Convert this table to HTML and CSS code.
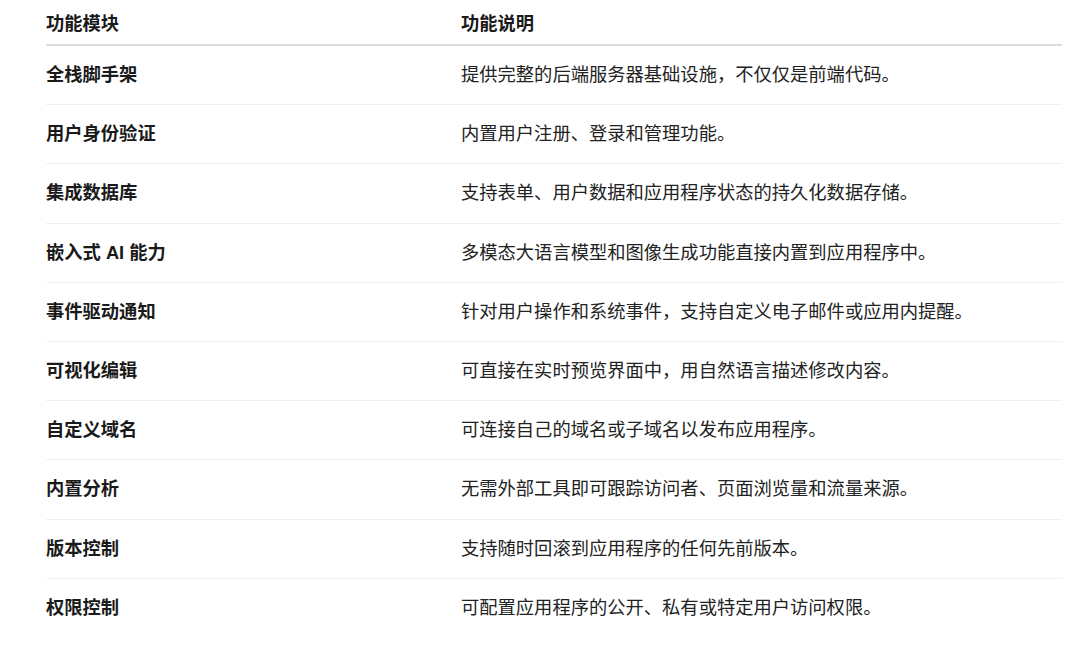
FILE: index.html
```html
<!DOCTYPE html>
<html lang="zh-CN">
<head>
<meta charset="utf-8">
<title>功能模块</title>
<link rel="stylesheet" href="styles.css">
</head>
<body>
<table class="features">
  <thead>
    <tr>
      <th class="col-name">功能模块</th>
      <th class="col-desc">功能说明</th>
    </tr>
  </thead>
  <tbody>
    <tr><td class="name">全栈脚手架</td><td class="desc">提供完整的后端服务器基础设施，不仅仅是前端代码。</td></tr>
    <tr><td class="name">用户身份验证</td><td class="desc">内置用户注册、登录和管理功能。</td></tr>
    <tr><td class="name">集成数据库</td><td class="desc">支持表单、用户数据和应用程序状态的持久化数据存储。</td></tr>
    <tr><td class="name">嵌入式 AI 能力</td><td class="desc">多模态大语言模型和图像生成功能直接内置到应用程序中。</td></tr>
    <tr><td class="name">事件驱动通知</td><td class="desc">针对用户操作和系统事件，支持自定义电子邮件或应用内提醒。</td></tr>
    <tr><td class="name">可视化编辑</td><td class="desc">可直接在实时预览界面中，用自然语言描述修改内容。</td></tr>
    <tr><td class="name">自定义域名</td><td class="desc">可连接自己的域名或子域名以发布应用程序。</td></tr>
    <tr><td class="name">内置分析</td><td class="desc">无需外部工具即可跟踪访问者、页面浏览量和流量来源。</td></tr>
    <tr><td class="name">版本控制</td><td class="desc">支持随时回滚到应用程序的任何先前版本。</td></tr>
    <tr><td class="name">权限控制</td><td class="desc">可配置应用程序的公开、私有或特定用户访问权限。</td></tr>
  </tbody>
</table>
</body>
</html>
```

FILE: styles.css
```css
html, body {
  margin: 0;
  padding: 0;
  background: #ffffff;
}

body {
  font-family: "Liberation Sans", "Noto Sans CJK SC", sans-serif;
  font-size: 18.3px;
  color: #1f1f1f;
}

.features {
  margin-left: 46px;
  width: 1016px;
  border-collapse: collapse;
  table-layout: fixed;
}

.features th,
.features td {
  text-align: left;
  padding: 0;
  line-height: 24px;
  vertical-align: middle;
}

.col-name {
  width: 415px;
}

.features th {
  font-weight: 600;
  color: #1a1a1a;
  padding-top: 12px;
  padding-bottom: 8px;
  border-bottom: 2px solid #dedede;
}

.features td {
  padding-top: 17.1px;
  padding-bottom: 17.1px;
}

.features tbody tr + tr td {
  border-top: 1px solid #f0f0f0;
}

.name {
  font-weight: 600;
  color: #1a1a1a;
}

.desc {
  font-weight: 400;
  color: #222222;
}
```
